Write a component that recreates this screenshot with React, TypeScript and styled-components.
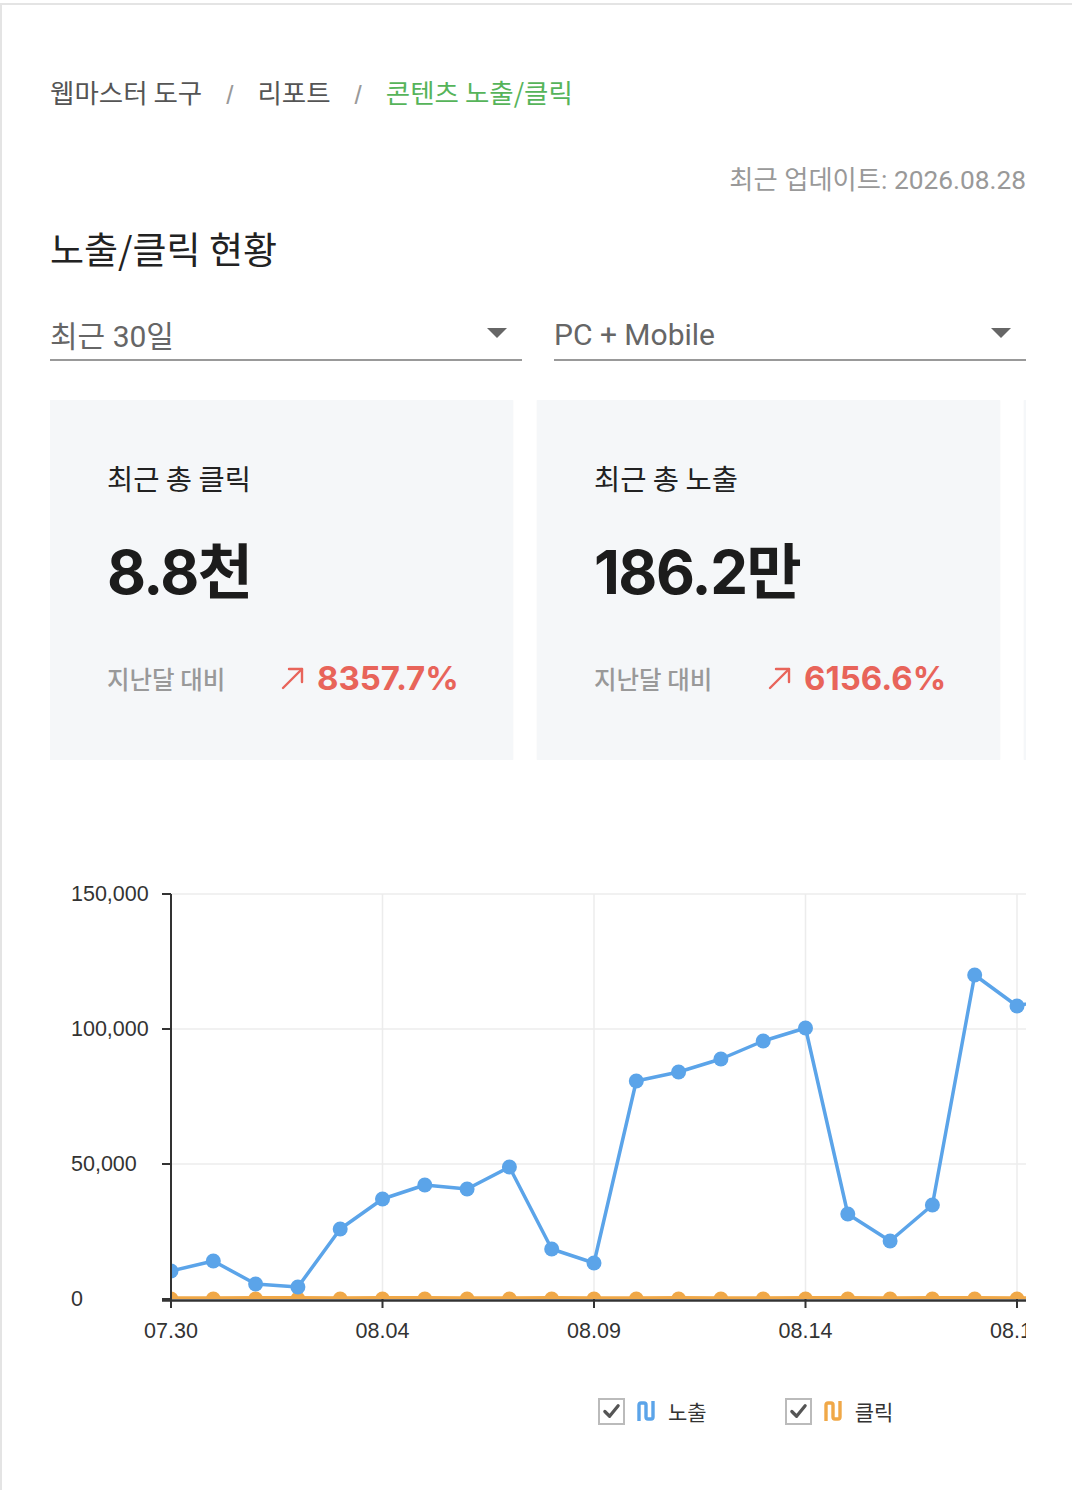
import React from "react";
import styled, { createGlobalStyle } from "styled-components";

const GlobalStyle = createGlobalStyle`
  html, body { margin: 0; padding: 0; background: #fff; }
  body {
    font-family: "Noto Sans CJK KR", "Noto Sans", sans-serif;
    -webkit-font-smoothing: antialiased;
  }
`;

const Frame = styled.div`
  margin-top: 3px;
  border-top: 2px solid #e4e4e4;
  border-left: 2px solid #e4e4e4;
  padding: 0 46px 0 48px;
  min-height: 1487px;
  box-sizing: border-box;
  background: #fff;
`;

const Breadcrumb = styled.nav`
  display: flex;
  align-items: center;
  gap: 24px;
  margin-top: 68px;
  font-size: 26.5px;
  line-height: 32px;
  color: #555;
`;

const Crumb = styled.span<{ $active?: boolean }>`
  color: ${(p) => (p.$active ? "#56b45a" : "#555")};
`;

const Slash = styled.span`
  color: #999;
  font-family: "Liberation Sans", sans-serif;
  font-size: 26px;
  padding-top: 6px;
`;

const Updated = styled.div`
  margin-top: 53px;
  text-align: right;
  font-family: "Roboto", "Noto Sans CJK KR", sans-serif;
  font-size: 26.3px;
  line-height: 32px;
  color: #999;
`;

const Title = styled.h1`
  margin: 30px 0 0;
  font-size: 37px;
  line-height: 44px;
  font-weight: 400;
  color: #222;
`;

const Filters = styled.div`
  display: grid;
  grid-template-columns: 1fr 1fr;
  gap: 32px;
  margin-top: 44px;
`;

const Select = styled.div`
  display: flex;
  align-items: center;
  justify-content: space-between;
  height: 45px;
  box-sizing: content-box;
  padding: 0 15px 0 0;
  border-bottom: 2px solid #999;
  font-family: "Roboto", "Noto Sans CJK KR", sans-serif;
  font-size: 30px;
  color: #666;
`;

const SelectText = styled.span`
  margin-top: -5px;
`;

const Caret = styled.span`
  width: 0;
  height: 0;
  border-left: 10px solid transparent;
  border-right: 10px solid transparent;
  border-top: 10px solid #666;
  margin-top: -7px;
`;

const CardRow = styled.div`
  display: flex;
  gap: 24px;
  margin-top: 39px;
  overflow: hidden;
`;

const Card = styled.div`
  flex: 0 0 463px;
  height: 360px;
  box-sizing: border-box;
  padding: 60px 0 0 57px;
  background: #f5f7f9;
  box-shadow: 0 0 2px rgba(0, 0, 0, 0.04);
`;

const CardLabel = styled.div`
  font-size: 28.5px;
  line-height: 36px;
  color: #222;
`;

const CardValue = styled.div`
  margin-top: 42px;
  font-family: "Inter", "Noto Sans CJK KR", sans-serif;
  font-weight: 700;
  font-size: 60px;
  line-height: 68px;
  letter-spacing: -1.5px;
  color: #1c1c1c;
`;

const ChangeRow = styled.div`
  display: flex;
  align-items: center;
  margin-top: 52px;
  height: 40px;
`;

const ChangeLabel = styled.span`
  width: 174px;
  font-size: 24.5px;
  font-weight: 500;
  color: #999;
`;

const ChangeValue = styled.span`
  display: flex;
  align-items: center;
  gap: 12px;
  font-family: "Inter", sans-serif;
  font-weight: 700;
  font-size: 33px;
  color: #e8645a;
`;

const ChartWrap = styled.div`
  margin-top: 111px;
`;

const ChartSvg = styled.svg`
  display: block;
`;

const Legend = styled.div`
  display: flex;
  align-items: center;
  gap: 78px;
  margin-top: 45px;
  padding-left: 548px;
`;

const LegendItem = styled.div`
  display: flex;
  align-items: center;
  font-size: 21px;
  color: #333;
`;

const Check = styled.span`
  display: flex;
  align-items: center;
  justify-content: center;
  width: 27px;
  height: 27px;
  box-sizing: border-box;
  border: 2px solid #bbb;
  margin-right: 11px;
`;

const LegendText = styled.span`
  margin-left: 12px;
`;

const BLUE = "#5ba4e9";
const ORANGE = "#f0a848";

const days = Array.from({ length: 30 }, (_, i) => {
  const d = new Date(2026, 6, 30 + i);
  return `${String(d.getMonth() + 1).padStart(2, "0")}.${String(d.getDate()).padStart(2, "0")}`;
});

const impressions = [
  10370, 14074, 5555, 4444, 25926, 37037, 42222, 40741, 48889, 18519, 13333,
  80741, 84074, 88889, 95556, 100370, 31481, 21481, 34815, 120000, 108519,
  112000, 60000, 70000, 50000, 80000, 90000, 60000, 40000, 70000,
];
const clicks = impressions.map((_, i) => 250 + ((i * 37) % 120));

const W = 976;
const H = 480;
const AX = 121;
const ZERO = 428;
const SCALE = 405 / 150000;
const DAY = 42.3;
const xOf = (i: number) => AX + i * DAY;
const yOf = (v: number) => ZERO - v * SCALE;

function Chart() {
  const ticksY = [150000, 100000, 50000, 0];
  const ticksX = [0, 5, 10, 15, 20, 25];
  const line = (vals: number[]) =>
    vals.map((v, i) => `${i ? "L" : "M"}${xOf(i).toFixed(1)} ${yOf(v).toFixed(1)}`).join(" ");
  return (
    <ChartSvg width={W} height={H} viewBox={`0 0 ${W} ${H}`}>
      <defs>
        <clipPath id="plot">
          <rect x={AX} y={0} width={W - AX} height={ZERO} />
        </clipPath>
      </defs>
      {ticksY.slice(0, 3).map((t) => (
        <line key={t} x1={AX} x2={W} y1={yOf(t)} y2={yOf(t)} stroke="#ececec" strokeWidth={1.5} />
      ))}
      {ticksX.slice(1).map((i) => (
        <line key={i} x1={xOf(i)} x2={xOf(i)} y1={yOf(150000)} y2={ZERO} stroke="#ececec" strokeWidth={1.5} />
      ))}
      <g clipPath="url(#plot)">
        <path d={line(clicks)} fill="none" stroke={ORANGE} strokeWidth={4} strokeLinejoin="round" />
        {clicks.map((v, i) => (
          <circle key={i} cx={xOf(i)} cy={ZERO} r={7.5} fill={ORANGE} />
        ))}
        <path d={line(impressions)} fill="none" stroke={BLUE} strokeWidth={3.5} strokeLinejoin="round" />
        {impressions.map((v, i) => (
          <circle key={i} cx={xOf(i)} cy={yOf(v)} r={7.5} fill={BLUE} />
        ))}
      </g>
      <line x1={AX} x2={AX} y1={yOf(150000)} y2={ZERO + 8} stroke="#333" strokeWidth={2} />
      <line x1={AX - 9} x2={W} y1={ZERO + 1.5} y2={ZERO + 1.5} stroke="#333" strokeWidth={2.5} />
      {ticksY.map((t) => (
        <g key={t}>
          <line x1={AX - 9} x2={AX} y1={yOf(t)} y2={yOf(t)} stroke="#333" strokeWidth={2} />
          <text
            x={21}
            y={yOf(t) + 7}
            fontFamily="'Liberation Sans', Arial, sans-serif"
            fontSize={21.5}
            fill="#333"
          >
            {t.toLocaleString("en-US")}
          </text>
        </g>
      ))}
      {ticksX.map((i) => (
        <g key={i}>
          <line x1={xOf(i)} x2={xOf(i)} y1={ZERO} y2={ZERO + 9} stroke="#333" strokeWidth={2} />
          <text
            x={xOf(i)}
            y={ZERO + 39}
            textAnchor="middle"
            fontFamily="'Liberation Sans', Arial, sans-serif"
            fontSize={21.5}
            fill="#333"
          >
            {days[i]}
          </text>
        </g>
      ))}
    </ChartSvg>
  );
}

const UpArrow = () => (
  <svg width="24" height="24" viewBox="0 0 24 24" fill="none" stroke="#e8645a" strokeWidth="2.4" strokeLinecap="round" strokeLinejoin="round">
    <path d="M2 22 L21 3" />
    <path d="M8 3 H21 V16" />
  </svg>
);

const CheckMark = () => (
  <svg width="19" height="19" viewBox="0 0 20 20" fill="none" stroke="#555" strokeWidth="3.4" strokeLinecap="round" strokeLinejoin="round">
    <path d="M3 10 L8 15 L17 4" />
  </svg>
);

const Wave = ({ color }: { color: string }) => (
  <svg width="20" height="22" viewBox="0 0 20 22" fill="none" stroke={color} strokeWidth="3.4" strokeLinejoin="round">
    <path d="M3 21 V5 Q3 3 5 3 H8 Q10 3 10 5 V17 Q10 19 12 19 H15 Q17 19 17 17 V1" />
  </svg>
);

const stats = [
  { label: "최근 총 클릭", value: "8.8천", change: "8357.7%" },
  { label: "최근 총 노출", value: "186.2만", change: "6156.6%" },
];

export default function App() {
  return (
    <>
      <GlobalStyle />
      <Frame>
        <Breadcrumb>
          <Crumb>웹마스터 도구</Crumb>
          <Slash>/</Slash>
          <Crumb>리포트</Crumb>
          <Slash>/</Slash>
          <Crumb $active>콘텐츠 노출/클릭</Crumb>
        </Breadcrumb>
        <Updated>최근 업데이트: 2026.08.28</Updated>
        <Title>노출/클릭 현황</Title>
        <Filters>
          <Select>
            <SelectText>최근 30일</SelectText>
            <Caret />
          </Select>
          <Select>
            <SelectText>PC + Mobile</SelectText>
            <Caret />
          </Select>
        </Filters>
        <CardRow>
          {stats.map((s) => (
            <Card key={s.label}>
              <CardLabel>{s.label}</CardLabel>
              <CardValue>{s.value}</CardValue>
              <ChangeRow>
                <ChangeLabel>지난달 대비</ChangeLabel>
                <ChangeValue>
                  <UpArrow />
                  {s.change}
                </ChangeValue>
              </ChangeRow>
            </Card>
          ))}
          <Card />
        </CardRow>
        <ChartWrap>
          <Chart />
        </ChartWrap>
        <Legend>
          <LegendItem>
            <Check>
              <CheckMark />
            </Check>
            <Wave color={BLUE} />
            <LegendText>노출</LegendText>
          </LegendItem>
          <LegendItem>
            <Check>
              <CheckMark />
            </Check>
            <Wave color={ORANGE} />
            <LegendText>클릭</LegendText>
          </LegendItem>
        </Legend>
      </Frame>
    </>
  );
}
